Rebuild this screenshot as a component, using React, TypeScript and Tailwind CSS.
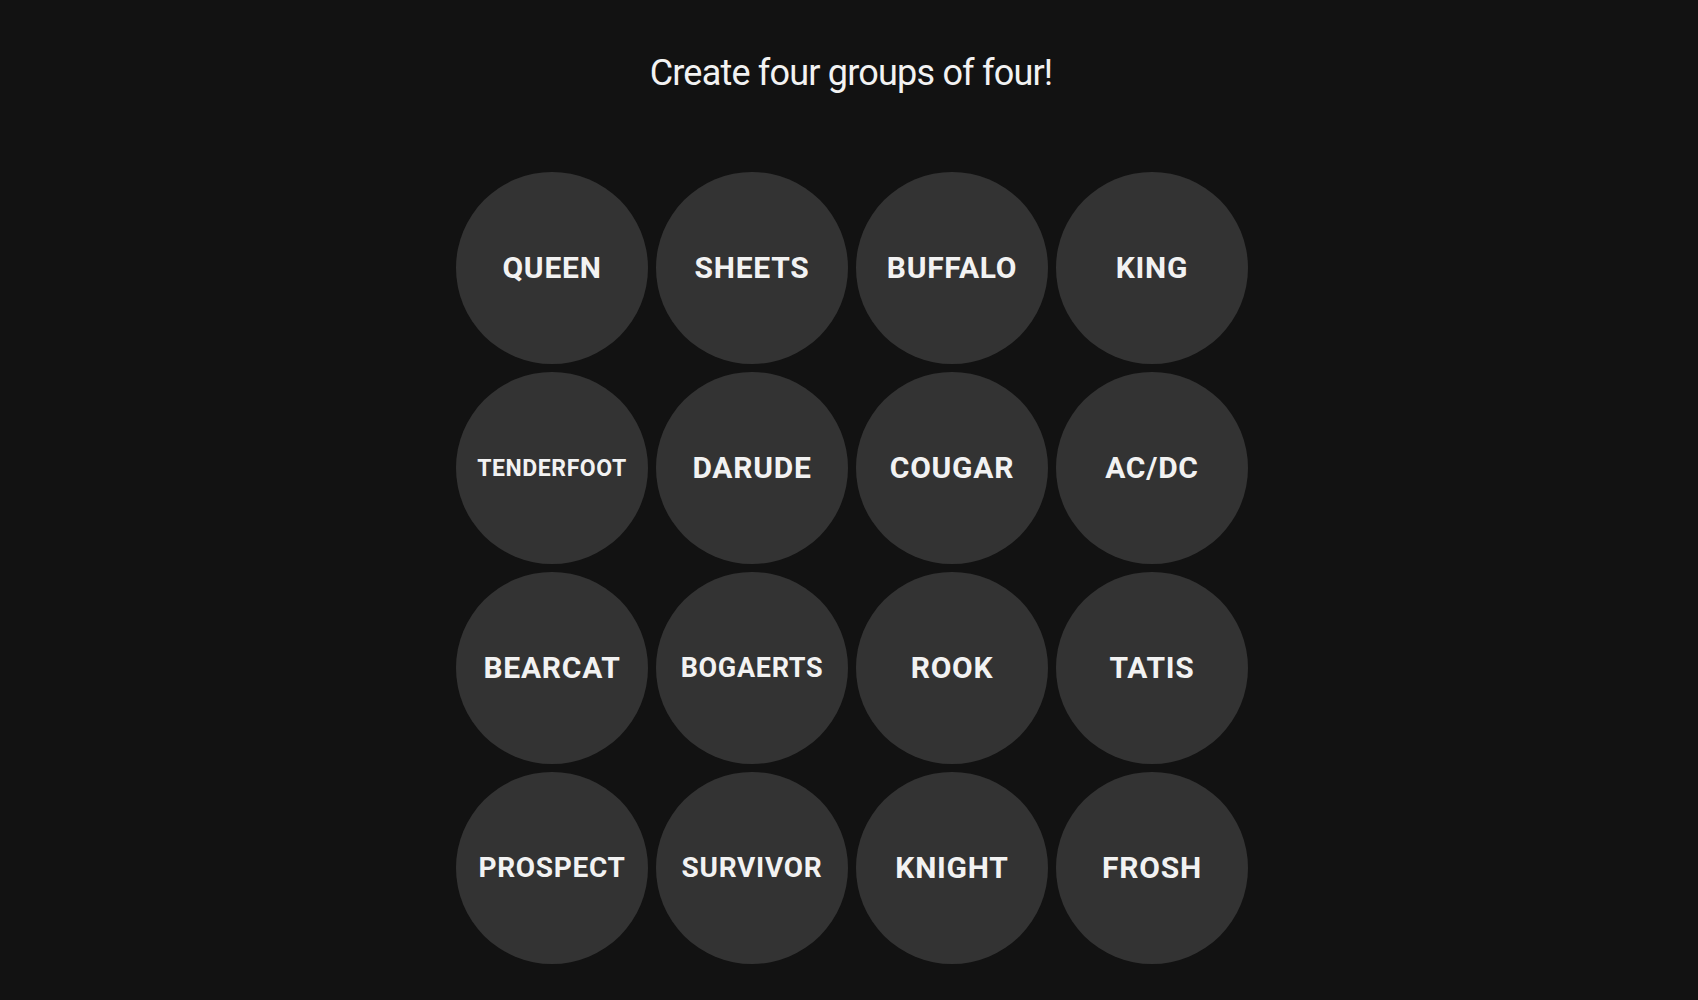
import React from 'react';

const WORDS: { text: string; size: string }[] = [
  { text: 'QUEEN', size: 'text-[30px]' },
  { text: 'SHEETS', size: 'text-[30px]' },
  { text: 'BUFFALO', size: 'text-[30px]' },
  { text: 'KING', size: 'text-[30px]' },
  { text: 'TENDERFOOT', size: 'text-[23px]' },
  { text: 'DARUDE', size: 'text-[30px]' },
  { text: 'COUGAR', size: 'text-[30px]' },
  { text: 'AC/DC', size: 'text-[30px]' },
  { text: 'BEARCAT', size: 'text-[30px]' },
  { text: 'BOGAERTS', size: 'text-[27px]' },
  { text: 'ROOK', size: 'text-[30px]' },
  { text: 'TATIS', size: 'text-[30px]' },
  { text: 'PROSPECT', size: 'text-[28px]' },
  { text: 'SURVIVOR', size: 'text-[28px]' },
  { text: 'KNIGHT', size: 'text-[30px]' },
  { text: 'FROSH', size: 'text-[30px]' },
];

const App: React.FC = () => {
  return (
    <div className="min-h-screen w-full bg-[#121212] pt-[51px] font-['Roboto','Liberation_Sans',sans-serif] text-[#f2f2f2]">
      <h1 className="text-center text-[36px] leading-[44px] font-normal tracking-[-0.8px] pl-[4px]">
        Create four groups of four!
      </h1>

      {/* Spielfeld */}
      <div className="mt-[77px] flex justify-center pl-[6px]">
        <div className="grid grid-cols-4 gap-2">
          {WORDS.map((w) => (
            <button
              key={w.text}
              className="flex h-[192px] w-[192px] items-center justify-center rounded-full bg-[#333333]"
            >
              <span className={`${w.size} font-bold leading-none tracking-[0.025em]`}>{w.text}</span>
            </button>
          ))}
        </div>
      </div>
    </div>
  );
};

export default App;
